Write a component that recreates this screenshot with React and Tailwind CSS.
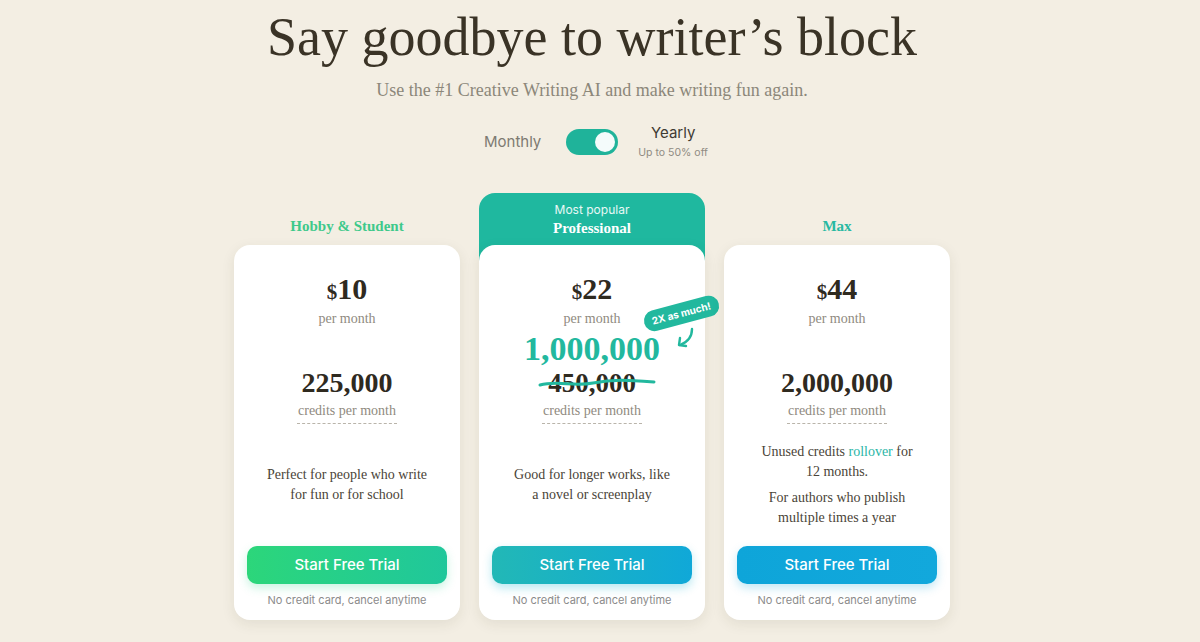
import { useState } from 'react';

const serif = { fontFamily: '"Liberation Serif", "Times New Roman", serif' };

const plans = [
  {
    name: 'Hobby & Student',
    price: '10',
    credits: '225,000',
    labelColor: 'text-[#3ec98b]',
    button: 'bg-gradient-to-r from-[#2cd67a] to-[#20c79b] shadow-[0_4px_10px_rgba(40,210,140,0.25)]',
    desc: (
      <p>
        Perfect for people who write
        <br />
        for fun or for school
      </p>
    ),
  },
  {
    name: 'Professional',
    price: '22',
    credits: '450,000',
    boosted: '1,000,000',
    popular: true,
    button: 'bg-gradient-to-r from-[#22b8b6] to-[#10a8d8] shadow-[0_4px_10px_rgba(20,180,210,0.3)]',
    desc: (
      <p>
        Good for longer works, like
        <br />
        a novel or screenplay
      </p>
    ),
  },
  {
    name: 'Max',
    price: '44',
    credits: '2,000,000',
    labelColor: 'text-[#27b9a2]',
    button: 'bg-gradient-to-r from-[#0ea5d9] to-[#12a8dc] shadow-[0_4px_10px_rgba(14,165,217,0.25)]',
    desc: (
      <div className="flex flex-col gap-[6px]">
        <p>
          Unused credits <span className="text-[#2ab6a6]">rollover</span> for
          <br />
          12 months.
        </p>
        <p>
          For authors who publish
          <br />
          multiple times a year
        </p>
      </div>
    ),
  },
];

function PlanCard({ plan }) {
  return (
    <div
      className={`w-[226px] flex flex-col rounded-t-[16px] ${
        plan.popular ? 'bg-[linear-gradient(#1fb89f_0_80px,transparent_80px)]' : ''
      }`}
    >
      {plan.popular ? (
        <div className="h-[52px] flex flex-col items-center pt-[9px]">
          <span className="text-[12px] leading-[16px] text-white/90" style={{ fontFamily: 'Inter, sans-serif' }}>
            Most popular
          </span>
          <span className="text-[15px] leading-[20px] font-bold text-white" style={serif}>
            {plan.name}
          </span>
        </div>
      ) : (
        <div className="h-[52px] flex items-end justify-center pb-[9px]">
          <span className={`text-[15px] leading-[20px] font-bold ${plan.labelColor}`} style={serif}>
            {plan.name}
          </span>
        </div>
      )}

      <div className="relative h-[375px] bg-white rounded-[16px] shadow-[0_4px_14px_rgba(60,50,20,0.09)] flex flex-col items-center pt-[28px] pb-[12px] px-[13px]">
        <div className="text-[#2f2a1f] font-bold leading-[32px]" style={serif}>
          <span className="text-[21px]">$</span>
          <span className="text-[30px]">{plan.price}</span>
        </div>
        <div className="text-[14px] leading-[18px] text-[#8f8a80]" style={serif}>
          per month
        </div>

        <div className="h-[70px] flex flex-col items-center justify-end">
          {plan.boosted ? (
            <>
              <div className="text-[34px] leading-[38px] font-bold text-[#22b89e]" style={serif}>
                {plan.boosted}
              </div>
              <div className="relative text-[27px] leading-[30px] font-bold text-[#2f2a1f]" style={serif}>
                {plan.credits}
                <svg className="absolute left-[-10px] top-[9px]" width="124" height="12" viewBox="0 0 124 12">
                  <path
                    d="M2 8 C 20 3, 35 10, 55 6 S 90 3, 116 5"
                    fill="none"
                    stroke="#22b89e"
                    strokeWidth="3"
                    strokeLinecap="round"
                  />
                </svg>
              </div>
            </>
          ) : (
            <div className="text-[28px] leading-[31px] font-bold text-[#2f2a1f]" style={serif}>
              {plan.credits}
            </div>
          )}
        </div>

        <div
          className="mt-[3px] text-[14px] leading-[20px] text-[#8f8a80] border-b border-dashed border-[#b9b4aa] pb-[2px] px-[1px]"
          style={serif}
        >
          credits per month
        </div>

        <div className="flex-1 flex items-center justify-center text-center text-[14px] leading-[20px] text-[#4a4438]" style={serif}>
          {plan.desc}
        </div>

        <button
          className={`w-full h-[38px] rounded-[10px] text-white text-[15px] font-medium ${plan.button}`}
          style={{ fontFamily: 'Inter, sans-serif' }}
        >
          Start Free Trial
        </button>
        <div className="mt-[8px] text-[11px] leading-[16px] text-[#8b8b8b]" style={{ fontFamily: 'Inter, sans-serif' }}>
          No credit card, cancel anytime
        </div>

        {plan.boosted && (
          <>
            <div
              className="absolute left-[164px] top-[58px] -rotate-[15deg] bg-[#22b89e] text-white text-[10px] font-bold rounded-full px-[8px] py-[3px] whitespace-nowrap"
              style={{ fontFamily: 'Inter, sans-serif' }}
            >
              2X as much!
            </div>
            <svg className="absolute left-[196px] top-[82px]" width="22" height="22" viewBox="0 0 22 22">
              <path d="M17 2 C 17 10, 13 15, 5 18" fill="none" stroke="#22b89e" strokeWidth="2.4" strokeLinecap="round" />
              <path d="M5 11 L 4 18 L 11 19" fill="none" stroke="#22b89e" strokeWidth="2.4" strokeLinecap="round" strokeLinejoin="round" />
            </svg>
          </>
        )}
      </div>
    </div>
  );
}

export default function App() {
  const [yearly, setYearly] = useState(true);

  return (
    <div className="min-h-screen w-full bg-[#f3eee3] overflow-hidden">
      <div className="pr-[16px] flex flex-col items-center pt-[5px]">
        <h1 className="text-[54px] leading-[64px] text-[#3a3326]" style={serif}>
          Say goodbye to writer’s block
        </h1>
        <p className="mt-[9px] text-[18px] leading-[24px] text-[#8c877a]" style={serif}>
          Use the #1 Creative Writing AI and make writing fun again.
        </p>

        <div className="mt-[22px] h-[36px] pl-[8px] flex items-center" style={{ fontFamily: 'Inter, sans-serif' }}>
          <span className="text-[15px] text-[#7d7a72]">Monthly</span>
          <button
            onClick={() => setYearly(!yearly)}
            className="ml-[25px] w-[52px] h-[26px] rounded-full bg-[#1fb39a] flex items-center px-[3px] justify-end"
          >
            <span className="w-[20px] h-[20px] rounded-full bg-[#f4fbfb]" />
          </button>
          <div className="ml-[20px] flex flex-col items-center">
            <span className="text-[15px] leading-[18px] text-[#3f3b33]">Yearly</span>
            <span className="mt-[4px] text-[10.5px] leading-[14px] text-[#8f8b82]">Up to 50% off</span>
          </div>
        </div>

        <div className="mt-[33px] flex gap-[19px]">
          {plans.map((plan) => (
            <PlanCard key={plan.name} plan={plan} />
          ))}
        </div>
      </div>
    </div>
  );
}
